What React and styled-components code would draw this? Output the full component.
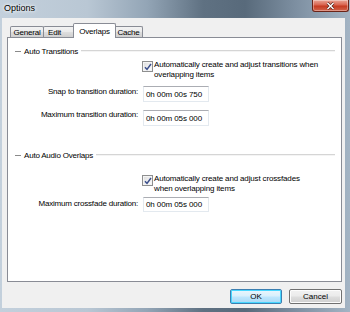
import React from 'react'
import styled, { createGlobalStyle } from 'styled-components'

const GlobalStyle = createGlobalStyle`
    html, body {
        margin: 0;
        padding: 0;
        background: #7e93a8;
    }
    body {
        font-family: "Liberation Sans", Arial, sans-serif;
        font-size: 8px;
        color: #000;
    }
`

const Window = styled.div`
    width: 350px;
    height: 312px;
    display: flex;
    flex-direction: column;
    background: linear-gradient(to right, #c3d0dc 0%, #b9c7d4 25%, #93a5b6 42%, #5f7182 58%, #586a7b 70%, #7c8ea0 84%, #a3b4c4 100%);
    overflow: hidden;
`

const TitleBar = styled.div`
    height: 18px;
    flex: none;
    display: flex;
    justify-content: space-between;
    align-items: flex-start;
`

const Title = styled.span`
    padding: 3px 0 0 4px;
    font-size: 9px;
    line-height: 11px;
    color: #000;
    text-shadow: 0 0 4px #ffffff, 0 0 3px #ffffff;
`

const CloseButton = styled.div`
    width: 35px;
    height: 11px;
    margin-right: 1px;
    display: flex;
    align-items: center;
    justify-content: center;
    border: 1px solid #6b2418;
    border-top: none;
    border-radius: 0 0 3px 3px;
    background: linear-gradient(#e9a596 0%, #d9644f 45%, #c53b22 55%, #d2644c 100%);
    box-shadow: inset 0 0 0 1px rgba(255, 255, 255, 0.35);
`

const Client = styled.div`
    flex: 1;
    margin: 0 5px 4px 2px;
    background: #f0f0f0;
    display: flex;
    flex-direction: column;
    padding-top: 6px;
`

const TabRow = styled.div`
    display: flex;
    align-items: flex-end;
    padding-left: 8px;
    height: 13px;
    position: relative;
    z-index: 1;
`

const Tab = styled.div`
    position: relative;
    box-sizing: border-box;
    width: ${p => p.$w}px;
    height: ${p => (p.$active ? '15px' : '11px')};
    margin: ${p => (p.$active ? '0 -2px -1px -2px' : '0 -1px 0 0')};
    z-index: ${p => (p.$active ? 2 : 0)};
    display: flex;
    align-items: center;
    justify-content: ${p => (p.$left ? 'flex-start' : 'center')};
    padding-left: ${p => (p.$left ? '4px' : '0')};
    border: 1px solid #898c95;
    border-bottom: none;
    border-radius: 2px 2px 0 0;
    background: ${p => (p.$active ? '#ffffff' : 'linear-gradient(#f3f3f3 0%, #ebebeb 45%, #dddddd 55%, #cfcfcf 100%)')};
    letter-spacing: -0.2px;
`

const Panel = styled.div`
    flex: 1;
    margin: 0 3px 0 5px;
    background: #ffffff;
    border: 1px solid #898c95;
    padding: 8px 6px 0 0;
    display: flex;
    flex-direction: column;
`

const Group = styled.div`
    display: flex;
    flex-direction: column;
    margin-top: ${p => p.$top || 0}px;
`

const GroupHeader = styled.div`
    display: flex;
    align-items: center;
    height: 10px;
    padding-left: 7px;
    gap: 3px;
    letter-spacing: -0.2px;
    &::before {
        content: '';
        width: 6px;
        height: 1px;
        background: #8a8a8a;
    }
    &::after {
        content: '';
        flex: 1;
        height: 1px;
        background: #d5d5d5;
        border-bottom: 1px solid #f4f4f4;
    }
`

const Form = styled.div`
    display: grid;
    grid-template-columns: 129px 1fr;
    column-gap: 5px;
    margin-left: 1px;
`

const Label = styled.div`
    grid-column: 1;
    text-align: right;
    align-self: center;
    letter-spacing: -0.2px;
    white-space: nowrap;
`

const CheckRow = styled.div`
    grid-column: 2;
    display: flex;
    align-items: flex-start;
    gap: 1px;
    margin-left: -1px;
    margin-top: ${p => p.$top || 0}px;
`

const CheckText = styled.span`
    line-height: 10px;
    letter-spacing: -0.15px;
`

const Box = styled.span`
    flex: none;
    width: 9px;
    height: 9px;
    margin-top: 1px;
    border: 1px solid #8e8f8f;
    background: linear-gradient(135deg, #dcdcdc, #ffffff);
    box-shadow: inset 0 0 0 1px #f4f4f4;
    display: flex;
    align-items: center;
    justify-content: center;
`

const Field = styled.div`
    grid-column: 2;
    width: 66px;
    height: ${p => p.$h || 14}px;
    margin-top: ${p => p.$top || 0}px;
    box-sizing: border-box;
    border: 1px solid #e3e9ef;
    border-top-color: #abadb3;
    background: #fff;
    display: flex;
    align-items: center;
    padding-left: 2px;
    letter-spacing: -0.1px;
`

const Footer = styled.div`
    display: flex;
    justify-content: flex-end;
    gap: 7px;
    padding: 7px 3px 4px 0;
`

const Button = styled.div`
    width: ${p => p.$w}px;
    height: 15px;
    box-sizing: border-box;
    display: flex;
    align-items: center;
    justify-content: center;
    border: 1px solid ${p => (p.$default ? '#3c7fb1' : '#707070')};
    border-radius: 2px;
    background: ${p => (p.$default
        ? 'linear-gradient(#eaf6fd 0%, #d9f0fc 45%, #bee6fd 55%, #a7d9f5 100%)'
        : 'linear-gradient(#f2f2f2 0%, #ebebeb 45%, #dddddd 55%, #cfcfcf 100%)')};
    box-shadow: inset 0 0 0 1px ${p => (p.$default ? '#48d7ff' : '#fcfcfc')};
`

function Check() {
    return (
        <Box>
            <svg width="8" height="8" viewBox="0 0 8 8">
                <path d="M1 4.2 L3 6.4 L7 1" fill="none" stroke="#3b4f8c" strokeWidth="1.5" />
            </svg>
        </Box>
    )
}

function App() {
    return (
        <>
            <GlobalStyle />
            <Window>
                <TitleBar>
                    <Title>Options</Title>
                    <CloseButton>
                        <svg width="9" height="8" viewBox="0 0 9 8">
                            <path d="M1.5 1 L7.5 7 M7.5 1 L1.5 7" stroke="#4a1a12" strokeWidth="2.6" />
                            <path d="M1.5 1 L7.5 7 M7.5 1 L1.5 7" stroke="#ffffff" strokeWidth="1.5" />
                        </svg>
                    </CloseButton>
                </TitleBar>
                <Client>
                    <TabRow>
                        <Tab $w={34}>General</Tab>
                        <Tab $w={33} $left>Edit</Tab>
                        <Tab $w={43} $active>Overlaps</Tab>
                        <Tab $w={29}>Cache</Tab>
                    </TabRow>
                    <Panel>
                        <Group>
                            <GroupHeader>Auto Transitions</GroupHeader>
                            <Form>
                                <CheckRow $top={4}>
                                    <Check />
                                    <CheckText>Automatically create and adjust transitions when<br />overlapping items</CheckText>
                                </CheckRow>
                                <Label>Snap to transition duration:</Label>
                                <Field $h={16} $top={6}>0h 00m 00s 750</Field>
                                <Label>Maximum transition duration:</Label>
                                <Field $h={16} $top={8}>0h 00m 05s 000</Field>
                            </Form>
                        </Group>
                        <Group $top={24}>
                            <GroupHeader>Auto Audio Overlaps</GroupHeader>
                            <Form>
                                <CheckRow $top={14}>
                                    <Check />
                                    <CheckText>Automatically create and adjust crossfades<br />when overlapping items</CheckText>
                                </CheckRow>
                                <Label>Maximum crossfade duration:</Label>
                                <Field $h={15} $top={3}>0h 00m 05s 000</Field>
                            </Form>
                        </Group>
                    </Panel>
                    <Footer>
                        <Button $w={52} $default>OK</Button>
                        <Button $w={53}>Cancel</Button>
                    </Footer>
                </Client>
            </Window>
        </>
    )
}

export default App
